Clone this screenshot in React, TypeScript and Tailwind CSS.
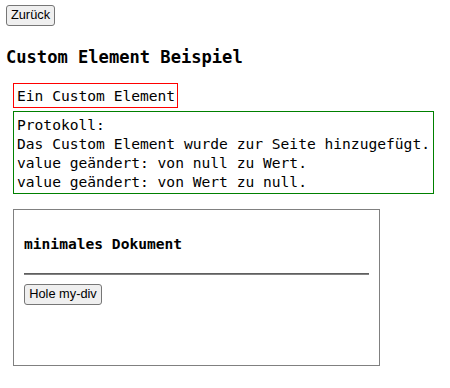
import { useState } from 'react';

const mono = "font-['DejaVu_Sans_Mono','Liberation_Mono',monospace]";
const btn =
  "block h-[21px] px-0 text-center rounded-[3px] border border-[#767676] bg-[#efefef] text-[12.8px] leading-none whitespace-nowrap text-black font-['Liberation_Sans',Arial,sans-serif]";

export default function App() {
  const [log] = useState<string[]>([
    'Das Custom Element wurde zur Seite hinzugefügt.',
    'value geändert: von null zu Wert.',
    'value geändert: von Wert zu null.',
  ]);

  return (
    <div className={`min-h-screen bg-white text-black pl-[6px] pt-[5px] ${mono}`}>
      <button className={`${btn} w-[49px]`}>Zurück</button>

      <h3 className="mt-[20px] text-[17.1px] leading-[22px] font-bold">Custom Element Beispiel</h3>

      {/* custom element */}
      <div className="ml-[7px] mt-[15px] w-[165px] border border-[#ff0000] px-[3px] pt-[3px] pb-[2px] text-[14.6px] leading-[18px] whitespace-nowrap">
        Ein Custom Element
      </div>

      {/* log */}
      <div className="ml-[7px] mt-[3px] w-[421px] border border-[#008000] px-[3px] pt-[3px] pb-[2px] text-[14.6px] leading-[19px] whitespace-nowrap">
        <div>Protokoll:</div>
        {log.map((l, i) => (
          <div key={i}>{l}</div>
        ))}
      </div>

      {/* iframe */}
      <div className="ml-[7px] mt-[15px] w-[367px] h-[157px] border border-[#808080] px-[10px] pt-[25px]">
        <h4 className="text-[14.6px] leading-[18px] font-bold">minimales Dokument</h4>
        <div className="mt-[20px] h-[2px] border-t border-b border-t-[#5f5f5f] border-b-[#828282]" />
        <button className={`${btn} mt-[9px] w-[78px]`}>Hole my-div</button>
      </div>
    </div>
  );
}
